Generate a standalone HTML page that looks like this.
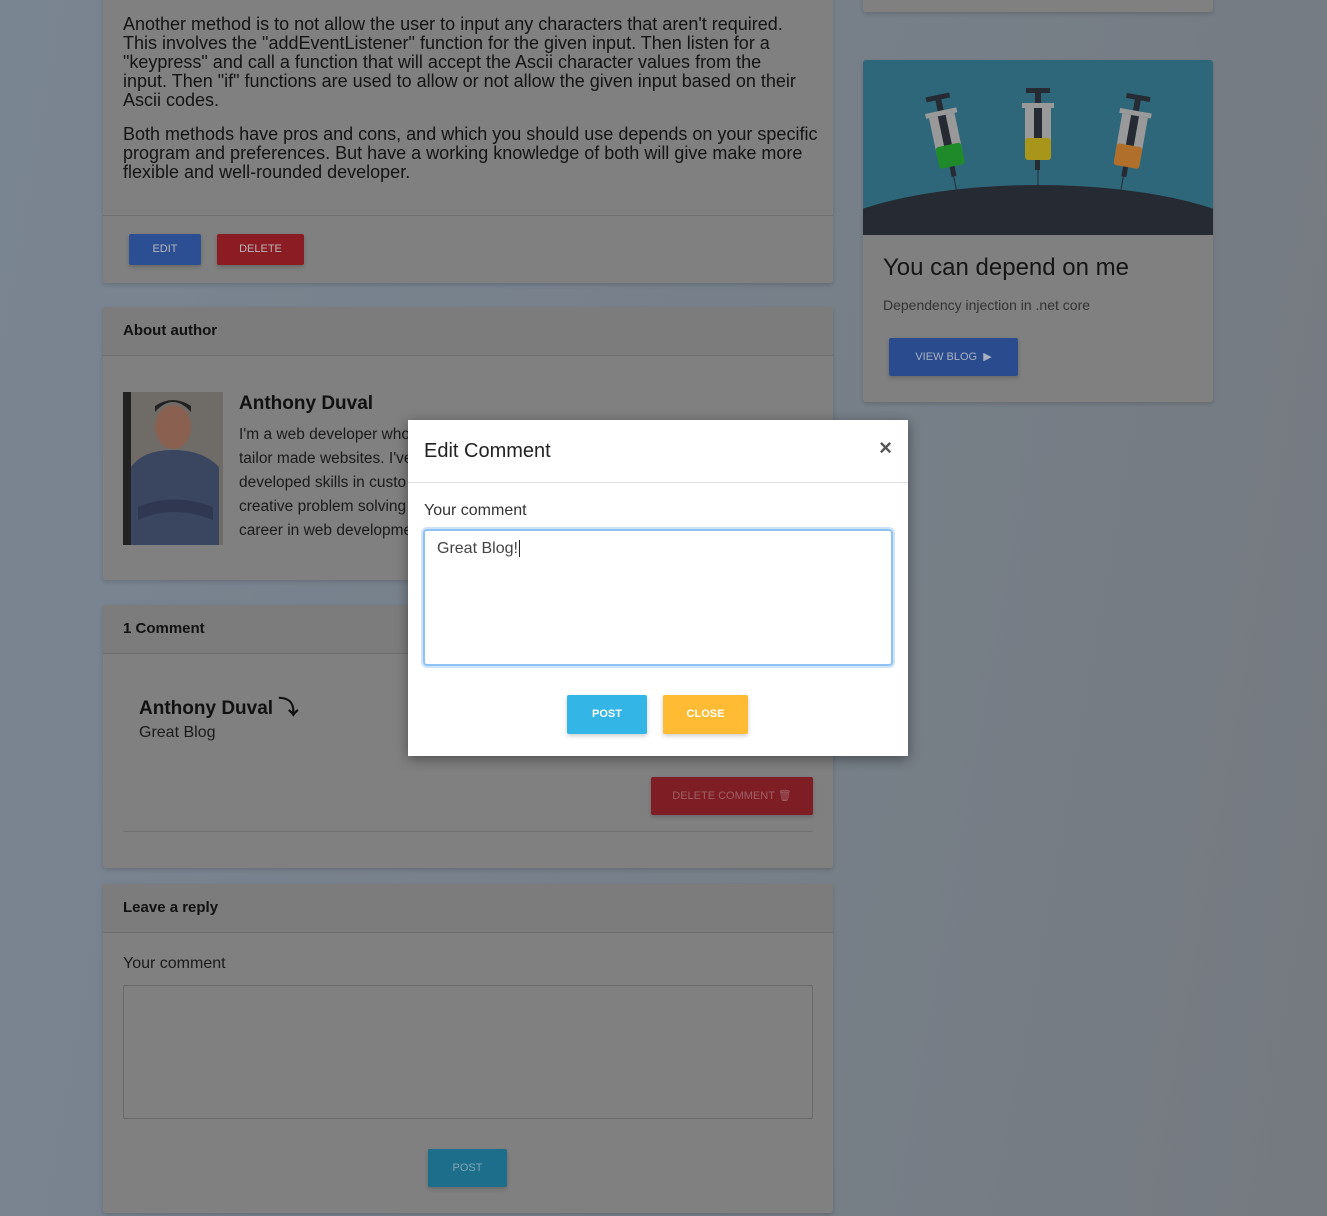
<!DOCTYPE html>
<html><head><meta charset="utf-8"><style>
*{box-sizing:border-box;margin:0;padding:0}
body{width:1327px;height:1216px;overflow:hidden;position:relative;font-family:"Liberation Sans",sans-serif;background:linear-gradient(100deg,#7a8592 0%,#77808a 50%,#757a80 100%);color:#111}
.card{position:absolute;background:#808080;border-radius:3px;box-shadow:0 2px 4px rgba(0,0,0,.15)}
.hd{position:absolute;left:0;right:0;top:0;border-bottom:1px solid #6e6e6e;background:#7c7c7c;font-weight:bold;font-size:15px;padding-left:20px}
.btn{position:absolute;color:#b8b8b8;font-size:11px;text-align:center;border-radius:2px;box-shadow:0 2px 4px rgba(0,0,0,.2)}
p{font-size:18px;line-height:19px;color:#141414;white-space:nowrap}
.txt{font-size:15.5px;line-height:24px;color:#1a1a1a}
</style></head><body>

<div class="card" style="left:103px;top:-10px;width:730px;height:293px">
 <div style="position:absolute;left:20px;top:25px;width:700px">
 <p>Another method is to not allow the user to input any characters that aren't required.<br>This involves the "addEventListener" function for the given input. Then listen for a<br>"keypress" and call a function that will accept the Ascii character values from the<br>input. Then "if" functions are used to allow or not allow the given input based on their<br>Ascii codes.</p>
 <p style="margin-top:15px">Both methods have pros and cons, and which you should use depends on your specific<br>program and preferences. But have a working knowledge of both will give make more<br>flexible and well-rounded developer.</p>
 </div>
 <div style="position:absolute;left:0;right:0;top:225px;border-top:1px solid #707070"></div>
 <div class="btn" style="left:26px;top:244px;width:72px;height:31px;line-height:31px;background:#2c4f93">EDIT</div>
 <div class="btn" style="left:114px;top:244px;width:87px;height:31px;line-height:31px;background:#8c1c24">DELETE</div>
</div>

<div class="card" style="left:863px;top:-20px;width:350px;height:32px"></div>

<div class="card" style="left:863px;top:60px;width:350px;height:342px;overflow:hidden">
 <svg width="350" height="175" style="position:absolute;left:0;top:0">
  <rect width="350" height="175" fill="#2d6779"/>
  <ellipse cx="175" cy="200" rx="240" ry="75" fill="#262b33"/>
  <g transform="rotate(-12 85 90)"><rect x="74" y="34" width="24" height="5" fill="#262b33"/><rect x="83" y="38" width="6" height="12" fill="#262b33"/><rect x="70" y="50" width="32" height="5" fill="#999"/><rect x="73" y="55" width="26" height="40" fill="#999"/><rect x="82" y="55" width="8" height="34" fill="#262b33"/><rect x="73" y="85" width="26" height="22" rx="3" fill="#1f8a2a"/><rect x="83" y="107" width="5" height="10" fill="#262b33"/><line x1="85" y1="117" x2="85" y2="135" stroke="#262b33"/></g>
  <g><rect x="163" y="28" width="24" height="5" fill="#262b33"/><rect x="172" y="32" width="6" height="12" fill="#262b33"/><rect x="159" y="43" width="32" height="5" fill="#999"/><rect x="162" y="48" width="26" height="40" fill="#999"/><rect x="171" y="48" width="8" height="34" fill="#262b33"/><rect x="162" y="78" width="26" height="22" rx="3" fill="#a8961a"/><rect x="172" y="100" width="5" height="10" fill="#262b33"/><line x1="175" y1="110" x2="175" y2="128" stroke="#262b33"/></g>
  <g transform="rotate(10 265 90)"><rect x="254" y="34" width="24" height="5" fill="#262b33"/><rect x="263" y="38" width="6" height="12" fill="#262b33"/><rect x="250" y="50" width="32" height="5" fill="#999"/><rect x="253" y="55" width="26" height="40" fill="#999"/><rect x="262" y="55" width="8" height="34" fill="#262b33"/><rect x="253" y="85" width="26" height="22" rx="3" fill="#b06f2a"/><rect x="263" y="107" width="5" height="10" fill="#262b33"/><line x1="265" y1="117" x2="265" y2="135" stroke="#262b33"/></g>
 </svg>
 <div style="position:absolute;left:20px;top:194px;font-size:24px;color:#151515">You can depend on me</div>
 <div style="position:absolute;left:20px;top:237px;font-size:14px;color:#333">Dependency injection in .net core</div>
 <div class="btn" style="left:26px;top:278px;width:129px;height:38px;line-height:38px;background:#2a4c8f;color:#a8b0c0">VIEW BLOG &nbsp;&#9654;</div>
</div>

<div class="card" style="left:103px;top:307px;width:730px;height:273px">
 <div class="hd" style="height:49px;line-height:47px">About author</div>
 <svg style="position:absolute;left:20px;top:85px" width="100" height="153"><rect width="100" height="153" fill="#6f6c68"/><rect x="0" y="0" width="8" height="153" fill="#222"/><ellipse cx="50" cy="35" rx="18" ry="22" fill="#8a6050"/><path d="M32 20 Q50 0 68 20 L68 14 Q50 2 32 14Z" fill="#222"/><path d="M8 153 L8 75 Q20 58 50 58 Q80 58 96 75 L96 153Z" fill="#3a4560"/><path d="M15 115 Q50 100 90 115 L90 128 Q50 112 15 128Z" fill="#2f3850"/></svg>
 <div style="position:absolute;left:136px;top:86px;font-size:19px;font-weight:bold">Anthony Duval</div>
 <div class="txt" style="position:absolute;left:136px;top:116px;width:300px">I'm a web developer who<br>tailor made websites. I've<br>developed skills in custo<br>creative problem solving<br>career in web developme</div>
</div>

<div class="card" style="left:103px;top:605px;width:730px;height:263px">
 <div class="hd" style="height:49px;line-height:47px">1 Comment</div>
 <div style="position:absolute;left:36px;top:86px;font-size:19px;font-weight:bold">Anthony Duval <span style="font-size:20px">&#10549;</span></div>
 <div style="position:absolute;left:36px;top:119px;font-size:16px;color:#1a1a1a">Great Blog</div>
 <div class="btn" style="left:548px;top:172px;width:162px;height:38px;line-height:38px;background:#7e1d23;color:#a06066">DELETE COMMENT &#128465;</div>
 <div style="position:absolute;left:20px;right:20px;top:226px;border-top:1px solid #727272"></div>
</div>

<div class="card" style="left:103px;top:884px;width:730px;height:329px">
 <div class="hd" style="height:49px;line-height:47px">Leave a reply</div>
 <div style="position:absolute;left:20px;top:71px;font-size:16px;color:#1a1a1a">Your comment</div>
 <div style="position:absolute;left:20px;top:101px;width:690px;height:134px;border:1px solid #6a6a6a;border-radius:2px"></div>
 <div class="btn" style="left:325px;top:265px;width:79px;height:38px;line-height:38px;background:#1c6e8a;color:#7fa7b5">POST</div>
</div>

<div style="position:absolute;left:408px;top:420px;width:500px;height:336px;background:#fff;box-shadow:0 3px 12px rgba(0,0,0,.4)">
 <div style="position:absolute;left:16px;top:20px;font-size:20px;color:#222">Edit Comment</div>
 <div style="position:absolute;right:16px;top:15px;font-size:22px;color:#555;font-weight:bold">&times;</div>
 <div style="position:absolute;left:0;right:0;top:62px;border-top:1px solid #dde0e4"></div>
 <div style="position:absolute;left:16px;top:82px;font-size:16px;color:#333">Your comment</div>
 <div style="position:absolute;left:15px;top:109px;width:470px;height:137px;border:2px solid #8ec2f5;border-radius:4px;box-shadow:0 0 0 2px #cfe4fb"><span style="position:absolute;left:12px;top:9px;font-size:16px;color:#444">Great Blog!<span style="border-left:1px solid #222;margin-left:1px"></span></span></div>
 <div style="position:absolute;left:159px;top:275px;width:80px;height:39px;line-height:39px;background:#33b5e5;color:#fff;font-size:11px;font-weight:bold;text-align:center;border-radius:2px;box-shadow:0 2px 5px rgba(0,0,0,.2)">POST</div>
 <div style="position:absolute;left:255px;top:275px;width:85px;height:39px;line-height:39px;background:#ffbb33;color:#fff;font-size:11px;font-weight:bold;text-align:center;border-radius:2px;box-shadow:0 2px 5px rgba(0,0,0,.2)">CLOSE</div>
</div>
</body></html>
